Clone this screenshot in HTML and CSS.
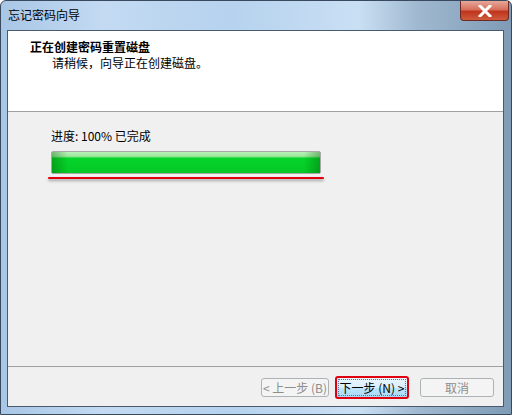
FILE: index.html
```html
<!DOCTYPE html>
<html lang="zh-CN">
<head>
    <meta charset="UTF-8">
    <title>忘记密码向导</title>
    <link rel="stylesheet" href="styles.css">
</head>
<body>
    <div class="window">
        <div class="titlebar">
            <span class="title">忘记密码向导</span>
            <div class="close">
                <svg width="14" height="12" viewBox="0 0 14 12">
                    <path d="M2 1 L12 11 M12 1 L2 11" stroke="#ffffff" stroke-width="3" stroke-linecap="square"/>
                </svg>
            </div>
        </div>
        <div class="client">
            <div class="header">
                <div class="head-title">正在创建密码重置磁盘</div>
                <div class="head-sub">请稍候，向导正在创建磁盘。</div>
            </div>
            <div class="content">
                <div class="progress-label">进度: 100% 已完成</div>
                <div class="progress">
                    <div class="progress-fill"></div>
                </div>
                <div class="underline"></div>
            </div>
            <div class="footer">
                <button class="btn disabled">&lt; 上一步 (B)</button>
                <button class="btn active">下一步 (N) &gt;</button>
                <button class="btn disabled cancel">取消</button>
            </div>
        </div>
    </div>
</body>
</html>
```

FILE: styles.css
```css
body {
    margin: 0;
    font-family: "Noto Sans CJK SC", "DejaVu Sans", sans-serif;
    font-size: 12px;
    background: #ffffff;
}
.window {
    width: 512px;
    height: 415px;
    box-sizing: border-box;
    display: flex;
    flex-direction: column;
    border-radius: 6px 6px 0 0;
    border: 1px solid #394a5e;
    background: linear-gradient(90deg, #a8c6e6 0%, #c3daf2 20%, #b6d2ee 45%, #c9dff4 70%, #9fb8cf 82%, #7f9bb6 100%);
}
.titlebar {
    height: 29px;
    display: flex;
    align-items: flex-start;
}
.title {
    margin: 6px 0 0 7px;
    color: #000000;
    line-height: 16px;
}
.close {
    margin-left: auto;
    margin-right: 2px;
    width: 47px;
    height: 19px;
    border: 1px solid #6b2a23;
    border-top: none;
    border-radius: 0 0 4px 4px;
    background: linear-gradient(180deg, #e6a89a 0%, #d7705c 45%, #c0351e 55%, #cf5b3c 100%);
    display: flex;
    align-items: center;
    justify-content: center;
}
.client {
    flex: 1;
    margin: 0 7px 7px 6px;
    border: 1px solid #4a5a6c;
    background: #f0f0f0;
    display: flex;
    flex-direction: column;
}
.header {
    height: 81px;
    background: #ffffff;
    border-bottom: 1px solid #a0a0a0;
    box-sizing: border-box;
    padding: 8px 0 0 22px;
}
.head-title {
    font-weight: bold;
    line-height: 16px;
}
.head-sub {
    margin-left: 22px;
    line-height: 16px;
}
.content {
    flex: 1;
    padding: 16px 0 0 43px;
}
.progress-label {
    line-height: 16px;
    margin-bottom: 7px;
}
.progress {
    width: 268px;
    height: 21px;
    border: 1px solid #a8a8a8;
    border-radius: 2px;
    background: #e6e6e6;
}
.progress-fill {
    height: 100%;
    background:
        linear-gradient(90deg, rgba(0,80,0,0.35) 0%, rgba(0,80,0,0) 6%, rgba(0,80,0,0) 94%, rgba(0,80,0,0.35) 100%),
        linear-gradient(180deg, #b8f0b8 0%, #9ee89e 20%, #06d42a 30%, #04c826 100%);
}
.underline {
    width: 276px;
    height: 2px;
    margin: 3px 0 0 -3px;
    background: #e00010;
    border-radius: 1px;
    box-shadow: 0 2px 3px rgba(0, 0, 0, 0.35);
}
.footer {
    height: 40px;
    border-top: 1px solid #a0a0a0;
    box-sizing: border-box;
    display: flex;
    align-items: center;
    padding: 1px 0 0 253px;
}
.btn {
    font-family: "Noto Sans CJK SC", "DejaVu Sans", sans-serif;
    font-size: 12px;
    height: 19px;
    width: 68px;
    padding: 0;
    border-radius: 3px;
    line-height: 15px;
    margin-right: 8px;
    white-space: nowrap;
}
.btn.disabled {
    color: #8d8d8d;
    border: 1px solid #adb2b5;
    background: #f4f4f4;
}
.btn.active {
    width: 74px;
    height: 23px;
    margin-right: 11px;
    margin-left: -2px;
    color: #000000;
    border: 2px solid #e00010;
    background: linear-gradient(180deg, #eaf6fd 0%, #d9effc 50%, #bee6fd 51%, #a7d9f5 100%);
    outline: 1px dotted #3c7fb1;
    outline-offset: -4px;
}
.btn.cancel {
    width: 74px;
}
```
